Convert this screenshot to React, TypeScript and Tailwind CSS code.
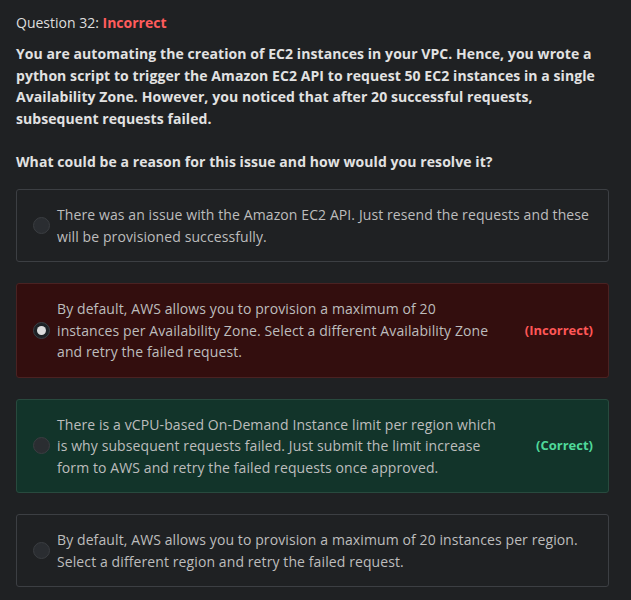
import React from "react";

type Opt = { text: string; status?: "incorrect" | "correct"; selected?: boolean };

const options: Opt[] = [
  { text: "There was an issue with the Amazon EC2 API. Just resend the requests and these will be provisioned successfully." },
  {
    text: "By default, AWS allows you to provision a maximum of 20 instances per Availability Zone. Select a different Availability Zone and retry the failed request.",
    status: "incorrect",
    selected: true,
  },
  {
    text: "There is a vCPU-based On-Demand Instance limit per region which is why subsequent requests failed. Just submit the limit increase form to AWS and retry the failed requests once approved.",
    status: "correct",
  },
  { text: "By default, AWS allows you to provision a maximum of 20 instances per region. Select a different region and retry the failed request." },
];

function Radio({ selected }: { selected?: boolean }) {
  if (selected) {
    return (
      <div className="w-[17px] h-[17px] rounded-full bg-[#1d2125] border border-[#3a3f44] flex items-center justify-center shrink-0">
        <div className="w-[9px] h-[9px] rounded-full bg-[#dcdcdc]" />
      </div>
    );
  }
  return <div className="w-[17px] h-[17px] rounded-full bg-[#2a2d31] border border-[#3a3d41] shrink-0" />;
}

export default function App() {
  return (
    <div
      className="min-h-[600px] bg-[#1f2123] pl-4 pr-[22px] pt-[13px] pb-4 text-[#c8c8c8]"
      style={{ fontFamily: '"Open Sans", "Noto Sans", sans-serif' }}
    >
      <div className="text-[14px] leading-[20px] text-[#dedede]">
        Question 32: <span className="font-bold text-[#ff5c5c]">Incorrect</span>
      </div>
      <div className="mt-[10px] text-[14px] leading-[21.5px] font-bold tracking-[0.07px] text-[#e2e2e2]">
        You are automating the creation of EC2 instances in your VPC. Hence, you wrote a python script to trigger the
        Amazon EC2 API to request 50 EC2 instances in a single Availability Zone. However, you noticed that after 20
        successful requests, subsequent requests failed.
        <br />
        <br />
        What could be a reason for this issue and how would you resolve it?
      </div>
      <div className="mt-[17px] flex flex-col gap-[21px]">
        {options.map((o, i) => {
          const cls =
            o.status === "incorrect"
              ? "bg-[#330e0e] border-[#4a2222]"
              : o.status === "correct"
              ? "bg-[#12342a] border-[#284a3e]"
              : "bg-[#1f2123] border-[#3c3f43]";
          return (
            <div key={i} className={`flex items-center rounded-[3px] border pl-4 pr-[15px] py-[14px] ${cls}`}>
              <Radio selected={o.selected} />
              <div className="ml-[7px] flex-1 text-[14px] leading-[21.5px] tracking-[0.1px] text-[#bdbdbd]">{o.text}</div>
              {o.status === "incorrect" && (
                <div className="w-[94px] shrink-0 text-right text-[13px] font-bold text-[#ff5757]">(Incorrect)</div>
              )}
              {o.status === "correct" && (
                <div className="w-[94px] shrink-0 text-right text-[13px] font-bold text-[#4fd99a]">(Correct)</div>
              )}
            </div>
          );
        })}
      </div>
    </div>
  );
}
